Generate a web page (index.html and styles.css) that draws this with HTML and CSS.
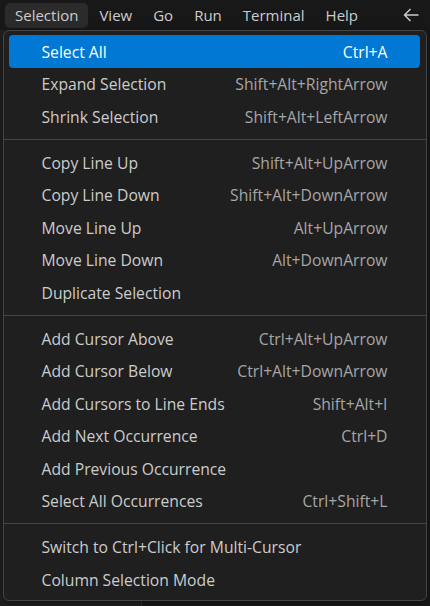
FILE: index.html
```html
<!DOCTYPE html>
<html>
<head>
<meta charset="utf-8">
<link rel="stylesheet" href="styles.css">
</head>
<body>
<div class="titlebar">
  <div class="menubar">
    <span class="mb-item active">Selection</span>
    <span class="mb-item">View</span>
    <span class="mb-item">Go</span>
    <span class="mb-item">Run</span>
    <span class="mb-item">Terminal</span>
    <span class="mb-item">Help</span>
  </div>
  <svg class="back" width="18" height="16" viewBox="0 0 18 16"><path d="M16.5 8H2.5M8.5 2L2.5 8l6 6" fill="none" stroke="#cccccc" stroke-width="1.4"/></svg>
</div>
<div class="workbench">
  <div class="gutter"></div>
  <div class="editor"></div>
</div>
<div class="menu">
  <div class="item selected"><span>Select All</span><span class="key">Ctrl+A</span></div>
  <div class="item"><span>Expand Selection</span><span class="key">Shift+Alt+RightArrow</span></div>
  <div class="item"><span>Shrink Selection</span><span class="key">Shift+Alt+LeftArrow</span></div>
  <div class="sep"></div>
  <div class="item"><span>Copy Line Up</span><span class="key">Shift+Alt+UpArrow</span></div>
  <div class="item"><span>Copy Line Down</span><span class="key">Shift+Alt+DownArrow</span></div>
  <div class="item"><span>Move Line Up</span><span class="key">Alt+UpArrow</span></div>
  <div class="item"><span>Move Line Down</span><span class="key">Alt+DownArrow</span></div>
  <div class="item"><span>Duplicate Selection</span><span class="key"></span></div>
  <div class="sep"></div>
  <div class="item"><span>Add Cursor Above</span><span class="key">Ctrl+Alt+UpArrow</span></div>
  <div class="item"><span>Add Cursor Below</span><span class="key">Ctrl+Alt+DownArrow</span></div>
  <div class="item"><span>Add Cursors to Line Ends</span><span class="key">Shift+Alt+I</span></div>
  <div class="item"><span>Add Next Occurrence</span><span class="key">Ctrl+D</span></div>
  <div class="item"><span>Add Previous Occurrence</span><span class="key"></span></div>
  <div class="item"><span>Select All Occurrences</span><span class="key">Ctrl+Shift+L</span></div>
  <div class="sep"></div>
  <div class="item"><span>Switch to Ctrl+Click for Multi-Cursor</span><span class="key"></span></div>
  <div class="item"><span>Column Selection Mode</span><span class="key"></span></div>
</div>
</body>
</html>
```

FILE: styles.css
```css
html, body {
  margin: 0;
  padding: 0;
  height: 100%;
  overflow: hidden;
}
body {
  background: #181818;
  font-family: "Open Sans", "Noto Sans", sans-serif;
  color: #cccccc;
}
.titlebar {
  height: 30px;
  display: flex;
  align-items: center;
  justify-content: space-between;
  background: #181818;
}
.menubar {
  display: flex;
  align-items: center;
  padding-left: 5px;
  gap: 1px;
}
.mb-item {
  font-size: 15px;
  line-height: 25px;
  padding: 0 10px;
  border-radius: 5px;
  color: #cccccc;
}
.mb-item.active {
  background: #2b2b2b;
}
.back {
  margin-right: 10px;
}
.workbench {
  display: flex;
  height: 576px;
}
.gutter {
  width: 141px;
  background: #1f1f1f;
  border-right: 1px solid #2b2b2b;
}
.editor {
  flex: 1;
  background: #181818;
}
.menu {
  position: absolute;
  left: 3px;
  top: 30px;
  width: 422px;
  box-sizing: content-box;
  padding: 4px 0;
  background: #1f1f1f;
  border: 1px solid #454545;
  border-radius: 6px;
  box-shadow: 0 2px 8px rgba(0,0,0,0.36);
}
.item {
  display: flex;
  justify-content: space-between;
  align-items: center;
  height: 32.5px;
  margin: 0 6px 0 5px;
  padding: 1px 32.5px 0;
  box-sizing: border-box;
  border-radius: 4px;
  font-size: 15.7px;
  color: #cccccc;
}
.item .key {
  color: #a6a6a6;
}
.item.selected {
  background: #0078d4;
  color: #ffffff;
}
.item.selected .key {
  color: #ffffff;
}
.sep {
  height: 0;
  border-bottom: 1px solid #454545;
  margin: 6.25px 0;
}
```
